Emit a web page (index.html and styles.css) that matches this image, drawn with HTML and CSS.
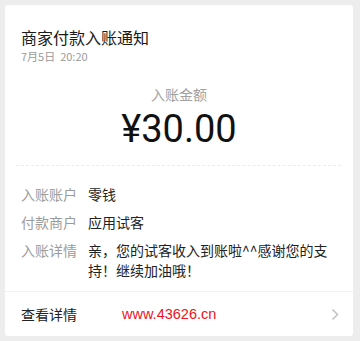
FILE: index.html
```html
<!DOCTYPE html>
<html>
<head>
<meta charset="utf-8">
<link rel="stylesheet" href="styles.css">
</head>
<body>
<div class="card">
  <div class="head">
    <div class="title">商家付款入账通知</div>
    <div class="date">7月5日&nbsp;&nbsp;20:20</div>
  </div>
  <div class="amount-box">
    <div class="amount-label">入账金额</div>
    <div class="amount">¥30.00</div>
  </div>
  <div class="divider"></div>
  <div class="rows">
    <div class="row"><div class="label">入账账户</div><div class="value">零钱</div></div>
    <div class="row"><div class="label">付款商户</div><div class="value">应用试客</div></div>
    <div class="row"><div class="label">入账详情</div><div class="value">亲，您的试客收入到账啦^^感谢您的支持！继续加油哦！</div></div>
  </div>
  <div class="foot">
    <div class="foot-text">查看详情</div>
    <div class="watermark">www.43626.cn</div>
    <svg class="chev" width="8" height="13" viewBox="0 0 8 13"><path d="M1.5 1.5 L6.5 6.5 L1.5 11.5" fill="none" stroke="#c4c4c4" stroke-width="1.6"/></svg>
  </div>
</div>
</body>
</html>
```
FILE: styles.css
```css
html, body { margin: 0; padding: 0; }
body {
  background: #ededed;
  width: 360px;
  height: 341px;
  font-family: "Noto Sans CJK SC", "Noto Sans", sans-serif;
  padding: 5px 7px 5px 5px;
  box-sizing: border-box;
}
.card {
  background: #fff;
  height: 331px;
  border-radius: 3px;
  display: flex;
  flex-direction: column;
}
.head { padding: 21px 0 0 16px; }
.title { font-size: 16px; color: #1a1a1a; line-height: 22px; }
.date { font-size: 11px; color: #9a9a9a; line-height: 14px; margin-top: 1px; }
.amount-box { text-align: center; padding-top: 22px; }
.amount-label { font-size: 14px; color: #a0a0a0; line-height: 18px; }
.amount { font-family: Roboto, "Noto Sans", sans-serif; font-size: 38px; color: #111; line-height: 40px; margin-top: 6px; }
.divider { margin: 16px 12px 0 11px; border-top: 1px dashed #ececec; }
.rows { padding: 18px 16px 0 16px; }
.row { display: flex; font-size: 14px; line-height: 20px; margin-bottom: 8px; }
.label { color: #9c9c9c; width: 67px; flex: none; }
.value { color: #222; }
.foot {
  margin-top: auto;
  border-top: 1px solid #f2f2f2;
  height: 44px;
  display: flex;
  align-items: center;
  padding: 0 14px 0 16px;
}
.foot-text { font-size: 14px; color: #222; width: 101px; }
.watermark { font-family: "Liberation Sans", sans-serif; font-size: 14.5px; color: #e8141c; flex: 1; }
.chev { flex: none; }
```
